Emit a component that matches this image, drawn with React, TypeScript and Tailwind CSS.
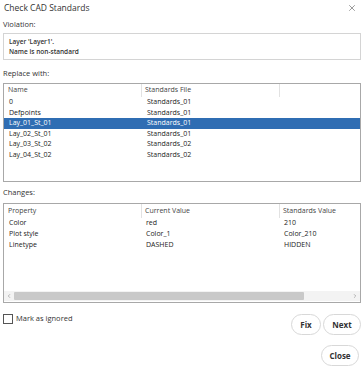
import { X, ChevronLeft, ChevronRight } from 'lucide-react';

const layers = [
  { name: '0', file: 'Standards_01' },
  { name: 'Defpoints', file: 'Standards_01' },
  { name: 'Lay_01_St_01', file: 'Standards_01', selected: true },
  { name: 'Lay_02_St_01', file: 'Standards_01' },
  { name: 'Lay_03_St_02', file: 'Standards_02' },
  { name: 'Lay_04_St_02', file: 'Standards_02' },
];

const changes = [
  { prop: 'Color', current: 'red', standard: '210' },
  { prop: 'Plot style', current: 'Color_1', standard: 'Color_210' },
  { prop: 'Linetype', current: 'DASHED', standard: 'HIDDEN' },
];

const App = () => {
  return (
    <div
      className="w-[363px] h-[366px] bg-white text-[#2b2b2b] pl-[3px] pr-[2px] overflow-hidden"
      style={{ fontFamily: '"Open Sans", "Noto Sans", sans-serif' }}
    >
      {/* Title bar */}
      <div className="h-[16px] flex items-center justify-between pl-[1px] pr-[4px]">
        <span className="text-[8.5px] font-medium text-[#333]">Check CAD Standards</span>
        <X size={10} strokeWidth={1.3} className="text-[#444]" />
      </div>

      {/* Violation */}
      <div className="mt-[3px] h-[12px] flex items-center text-[7.5px] font-medium text-[#333]">Violation:</div>
      <div className="mt-[2px] h-[27px] border border-[#d4d4d4] pl-[5px] pt-[3px] text-[6.5px] font-semibold leading-[10px] text-[#333]">
        <div>Layer 'Layer1'.</div>
        <div>Name is non-standard</div>
      </div>

      {/* Replace with */}
      <div className="mt-[8px] h-[12px] flex items-center text-[7.5px] font-medium text-[#333]">Replace with:</div>
      <div className="mt-[3px] h-[99px] border border-[#a8a8a8] text-[7px]">
        <div className="h-[13px] flex items-center text-[#444]">
          <div className="w-[137px] pl-[4px]">Name</div>
          <div className="w-[138px] h-full flex items-center pl-[3px] border-l border-[#e2e2e2]">Standards File</div>
          <div className="flex-1 h-full border-l border-[#e2e2e2]" />
        </div>
        {layers.map((row) => (
          <div
            key={row.name}
            className={`h-[10.5px] flex items-center font-medium ${
              row.selected ? 'bg-[#2f6db3] text-white' : 'text-[#222]'
            }`}
          >
            <div className="w-[137px] pl-[5px]">{row.name}</div>
            <div className="pl-[6px]">{row.file}</div>
          </div>
        ))}
      </div>

      {/* Changes */}
      <div className="mt-[5px] h-[12px] flex items-center text-[7.5px] font-medium text-[#333]">Changes:</div>
      <div className="mt-[4px] h-[100px] border border-[#a8a8a8] text-[7px] flex flex-col">
        <div className="h-[14px] flex items-center text-[#444]">
          <div className="w-[137px] pl-[4px]">Property</div>
          <div className="w-[138px] h-full flex items-center pl-[3px] border-l border-[#e2e2e2]">Current Value</div>
          <div className="flex-1 h-full flex items-center pl-[3px] border-l border-[#e2e2e2]">Standards Value</div>
        </div>
        {changes.map((row) => (
          <div key={row.prop} className="h-[11px] flex items-center font-medium text-[#222]">
            <div className="w-[137px] pl-[5px]">{row.prop}</div>
            <div className="w-[138px] pl-[5px]">{row.current}</div>
            <div className="pl-[5px]">{row.standard}</div>
          </div>
        ))}
        <div className="flex-1" />
        <div className="h-[10px] mb-[1px] flex items-center bg-[#f3f3f3]">
          <ChevronLeft size={6} strokeWidth={2} className="text-[#777] mx-[2px]" />
          <div className="w-[290px] h-[8px] bg-[#c9c9c9] rounded-[1px]" />
          <div className="flex-1" />
          <ChevronRight size={6} strokeWidth={2} className="text-[#777] mx-[2px]" />
        </div>
      </div>

      {/* Footer */}
      <div className="mt-[10px] flex justify-between">
        <label className="flex items-center gap-[3px] h-[11px] text-[7.5px] text-[#333]">
          <span className="w-[10px] h-[10px] border border-[#555] bg-white" />
          Mark as ignored
        </label>
        <div className="flex flex-col items-end gap-[10px] pt-[1px]">
          <div className="flex gap-[2px]">
            <button className="w-[30px] h-[21px] rounded-full border border-[#d8d8d8] bg-white text-[8px] font-bold text-[#333]">
              Fix
            </button>
            <button className="w-[38px] h-[21px] rounded-full border border-[#d8d8d8] bg-white text-[8px] font-bold text-[#333]">
              Next
            </button>
          </div>
          <button className="w-[38px] h-[21px] mr-[2px] rounded-full border border-[#d8d8d8] bg-white text-[8px] font-bold text-[#333]">
            Close
          </button>
        </div>
      </div>
    </div>
  );
};

export default App;
